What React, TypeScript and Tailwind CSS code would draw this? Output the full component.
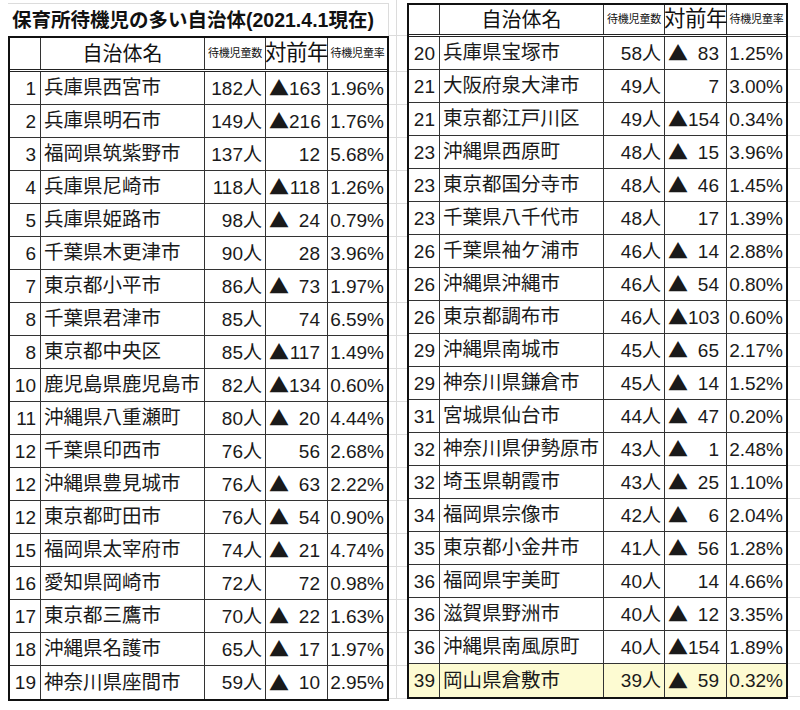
import React from "react";

type Row = { r: string; name: string; cnt: string; up: boolean; d: string; rate: string; hl?: boolean };

const left: Row[] = [
  { r: "1", name: "兵庫県西宮市", cnt: "182人", up: true, d: "163", rate: "1.96%" },
  { r: "2", name: "兵庫県明石市", cnt: "149人", up: true, d: "216", rate: "1.76%" },
  { r: "3", name: "福岡県筑紫野市", cnt: "137人", up: false, d: "12", rate: "5.68%" },
  { r: "4", name: "兵庫県尼崎市", cnt: "118人", up: true, d: "118", rate: "1.26%" },
  { r: "5", name: "兵庫県姫路市", cnt: "98人", up: true, d: "24", rate: "0.79%" },
  { r: "6", name: "千葉県木更津市", cnt: "90人", up: false, d: "28", rate: "3.96%" },
  { r: "7", name: "東京都小平市", cnt: "86人", up: true, d: "73", rate: "1.97%" },
  { r: "8", name: "千葉県君津市", cnt: "85人", up: false, d: "74", rate: "6.59%" },
  { r: "8", name: "東京都中央区", cnt: "85人", up: true, d: "117", rate: "1.49%" },
  { r: "10", name: "鹿児島県鹿児島市", cnt: "82人", up: true, d: "134", rate: "0.60%" },
  { r: "11", name: "沖縄県八重瀬町", cnt: "80人", up: true, d: "20", rate: "4.44%" },
  { r: "12", name: "千葉県印西市", cnt: "76人", up: false, d: "56", rate: "2.68%" },
  { r: "12", name: "沖縄県豊見城市", cnt: "76人", up: true, d: "63", rate: "2.22%" },
  { r: "12", name: "東京都町田市", cnt: "76人", up: true, d: "54", rate: "0.90%" },
  { r: "15", name: "福岡県太宰府市", cnt: "74人", up: true, d: "21", rate: "4.74%" },
  { r: "16", name: "愛知県岡崎市", cnt: "72人", up: false, d: "72", rate: "0.98%" },
  { r: "17", name: "東京都三鷹市", cnt: "70人", up: true, d: "22", rate: "1.63%" },
  { r: "18", name: "沖縄県名護市", cnt: "65人", up: true, d: "17", rate: "1.97%" },
  { r: "19", name: "神奈川県座間市", cnt: "59人", up: true, d: "10", rate: "2.95%" },
];

const right: Row[] = [
  { r: "20", name: "兵庫県宝塚市", cnt: "58人", up: true, d: "83", rate: "1.25%" },
  { r: "21", name: "大阪府泉大津市", cnt: "49人", up: false, d: "7", rate: "3.00%" },
  { r: "21", name: "東京都江戸川区", cnt: "49人", up: true, d: "154", rate: "0.34%" },
  { r: "23", name: "沖縄県西原町", cnt: "48人", up: true, d: "15", rate: "3.96%" },
  { r: "23", name: "東京都国分寺市", cnt: "48人", up: true, d: "46", rate: "1.45%" },
  { r: "23", name: "千葉県八千代市", cnt: "48人", up: false, d: "17", rate: "1.39%" },
  { r: "26", name: "千葉県袖ケ浦市", cnt: "46人", up: true, d: "14", rate: "2.88%" },
  { r: "26", name: "沖縄県沖縄市", cnt: "46人", up: true, d: "54", rate: "0.80%" },
  { r: "26", name: "東京都調布市", cnt: "46人", up: true, d: "103", rate: "0.60%" },
  { r: "29", name: "沖縄県南城市", cnt: "45人", up: true, d: "65", rate: "2.17%" },
  { r: "29", name: "神奈川県鎌倉市", cnt: "45人", up: true, d: "14", rate: "1.52%" },
  { r: "31", name: "宮城県仙台市", cnt: "44人", up: true, d: "47", rate: "0.20%" },
  { r: "32", name: "神奈川県伊勢原市", cnt: "43人", up: true, d: "1", rate: "2.48%" },
  { r: "32", name: "埼玉県朝霞市", cnt: "43人", up: true, d: "25", rate: "1.10%" },
  { r: "34", name: "福岡県宗像市", cnt: "42人", up: true, d: "6", rate: "2.04%" },
  { r: "35", name: "東京都小金井市", cnt: "41人", up: true, d: "56", rate: "1.28%" },
  { r: "36", name: "福岡県宇美町", cnt: "40人", up: false, d: "14", rate: "4.66%" },
  { r: "36", name: "滋賀県野洲市", cnt: "40人", up: true, d: "12", rate: "3.35%" },
  { r: "36", name: "沖縄県南風原町", cnt: "40人", up: true, d: "154", rate: "1.89%" },
  { r: "39", name: "岡山県倉敷市", cnt: "39人", up: true, d: "59", rate: "0.32%", hl: true },
];

function Header({ h }: { h: string }) {
  return (
    <div className={`flex ${h} border-b-[3px] border-double border-[#222] text-[#111]`}>
      <div className="w-[31px] shrink-0 border-r border-[#333]" />
      <div className="w-[164px] shrink-0 border-r border-[#333] flex items-center justify-center text-[20px] leading-none">
        自治体名
      </div>
      <div className="w-[61px] shrink-0 border-r border-[#333] flex items-center justify-center text-[11px] leading-none tracking-[-0.2px]">
        待機児童数
      </div>
      <div className="w-[62px] shrink-0 border-r border-[#333] flex items-center justify-center text-[21.5px] leading-none whitespace-nowrap overflow-visible tracking-[-0.5px]">
        対前年
      </div>
      <div className="flex-1 flex items-center justify-center text-[11px] leading-none tracking-[-0.2px]">
        待機児童率
      </div>
    </div>
  );
}

function DataRow({ row, last }: { row: Row; last: boolean }) {
  return (
    <div
      className={`flex h-[33px] text-[19px] leading-none text-[#1a1a1a] ${last ? "" : "border-b border-[#333]"} ${
        row.hl ? "bg-[#fdfbd2]" : ""
      }`}
    >
      <div className="w-[31px] shrink-0 border-r border-[#333] flex items-center justify-end pr-[4px]">{row.r}</div>
      <div className="w-[164px] shrink-0 border-r border-[#333] flex items-center pl-[3px] text-[19.5px] whitespace-nowrap overflow-hidden">
        {row.name}
      </div>
      <div className="w-[61px] shrink-0 border-r border-[#333] flex items-center justify-end pr-[3px]">{row.cnt}</div>
      <div
        className={`w-[62px] shrink-0 border-r border-[#333] flex items-center pl-[3px] pr-[7px] ${
          row.up ? "justify-between" : "justify-end"
        }`}
      >
        {row.up && <span className="font-['Noto_Sans_CJK_JP'] text-[20px]">▲</span>}
        <span>{row.d}</span>
      </div>
      <div className="flex-1 flex items-center justify-end pr-[3px]">{row.rate}</div>
    </div>
  );
}

function Table({ rows, headH }: { rows: Row[]; headH: string }) {
  return (
    <div className="w-[381px] shrink-0 border-2 border-[#111] bg-white">
      <Header h={headH} />
      {rows.map((r, i) => (
        <DataRow key={i} row={r} last={i === rows.length - 1} />
      ))}
    </div>
  );
}

function GapGrid() {
  const rows = Array.from({ length: 19 });
  return (
    <div className="w-[18px] shrink-0 flex flex-col">
      <div className="h-[36px] border-b border-[#dcdcdc] flex">
        <div className="w-[8px] border-r border-[#dcdcdc]" />
      </div>
      <div className="h-[36px] border-b border-[#dcdcdc] flex">
        <div className="w-[8px] border-r border-[#dcdcdc]" />
      </div>
      {rows.map((_, i) => (
        <div key={i} className="h-[33px] border-b border-[#dcdcdc] flex">
          <div className="w-[8px] border-r border-[#dcdcdc]" />
        </div>
      ))}
    </div>
  );
}

function RightEdge() {
  const rows = Array.from({ length: 20 });
  return (
    <div className="flex-1 flex flex-col pt-[3px]">
      <div className="h-[34px] border-b border-[#e2e2e2]" />
      {rows.map((_, i) => (
        <div key={i} className="h-[33px] border-b border-[#e2e2e2]" />
      ))}
    </div>
  );
}

export default function App() {
  return (
    <div className="w-[800px] h-[710px] bg-white overflow-hidden font-['Liberation_Sans','Noto_Sans_CJK_JP',sans-serif]">
      <div className="flex pl-[8px]">
        <div className="w-[381px] shrink-0 flex flex-col">
          <div className="mt-[3px] h-[33px] border-t border-r border-[#dcdcdc] flex items-center pl-[4px] pt-[2px] text-[19.5px] font-bold leading-none text-[#111] whitespace-nowrap">
            保育所待機児の多い自治体(2021.4.1現在)
          </div>
          <Table rows={left} headH="h-[34px]" />
        </div>
        <GapGrid />
        <div className="flex flex-col pt-[3px]">
          <Table rows={right} headH="h-[32px]" />
        </div>
        <RightEdge />
      </div>
    </div>
  );
}
